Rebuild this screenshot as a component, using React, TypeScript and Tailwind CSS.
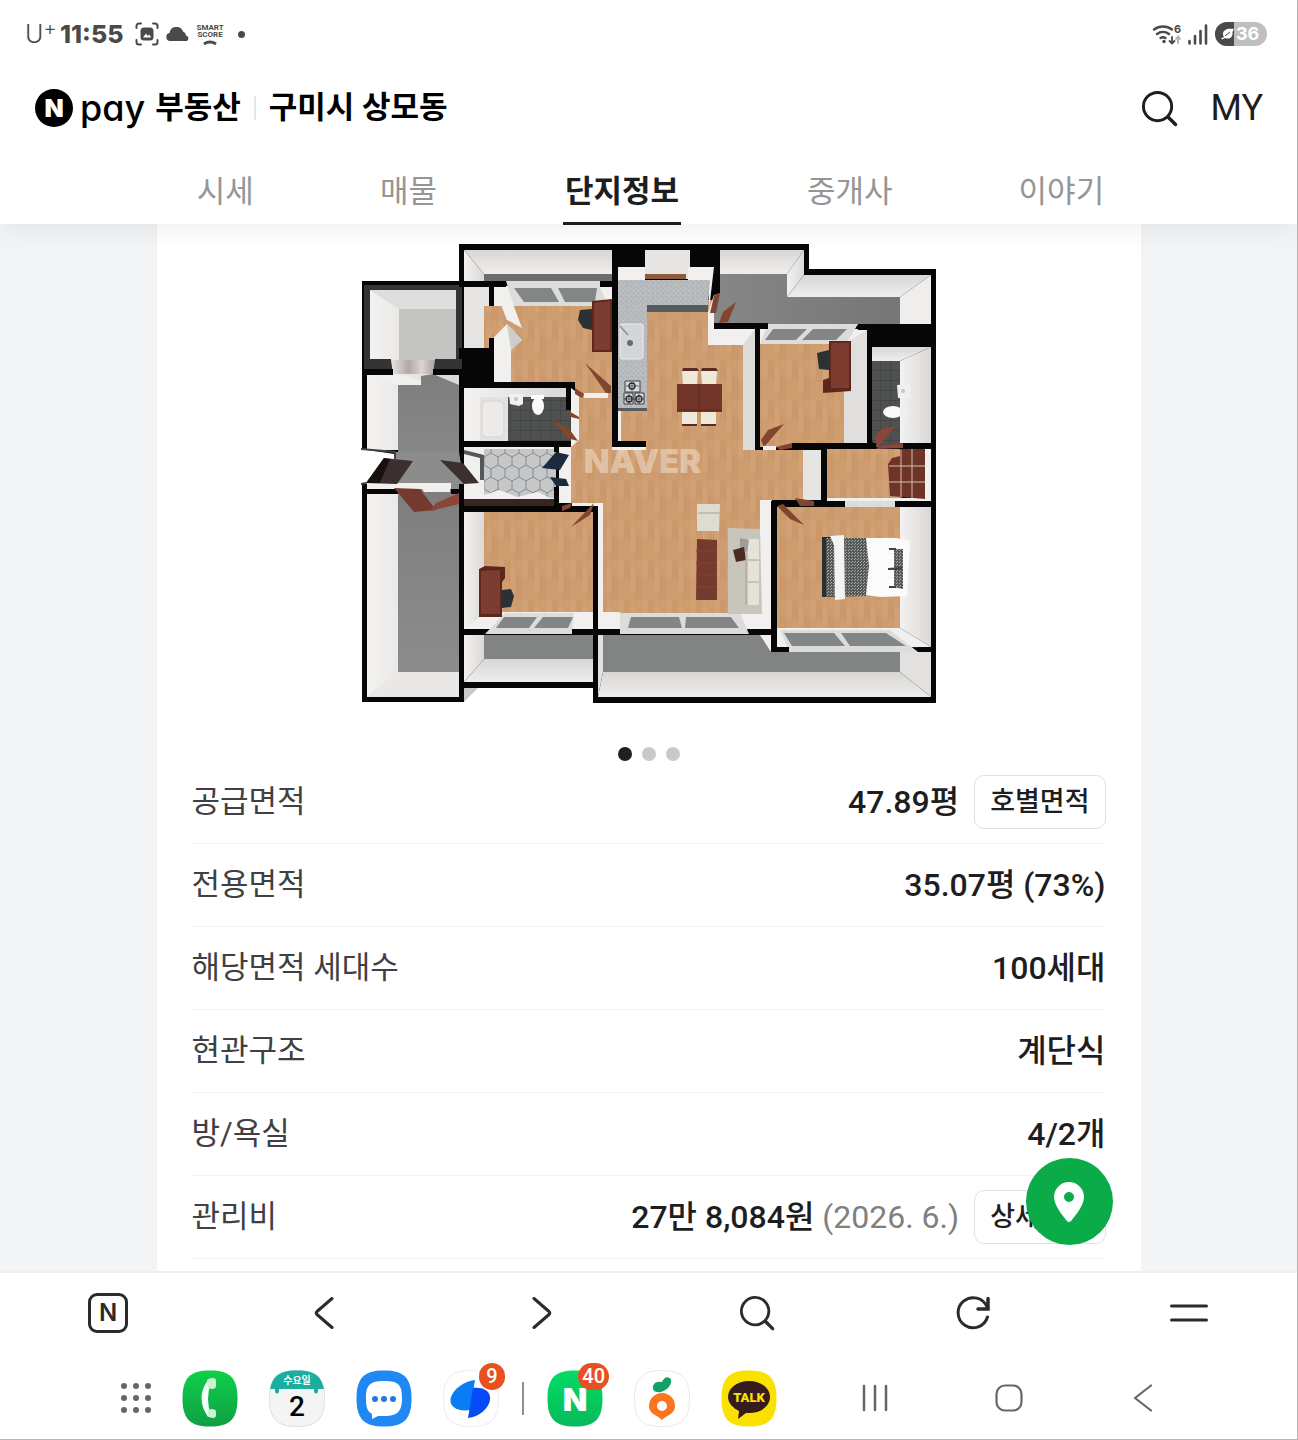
import type { ReactNode } from "react";

type Shape = [fill: string, points: string];

const WALL = "#e6e5e3";
const PALE = "#f1f0ee";
const WOOD = "url(#wood)";
const GLASS = "#838687";
const BROWN = "#743a2e";
const DOOR = "#82462f";
const FRAME = "#dcdcda";
const BLACK = "#060606";

// Fundo e pisos
const rooms: Shape[] = [
  ["#c9c9c9", "464,688 478,688 464,702"],
  [BLACK, "362,281 459,281 459,244 809,244 809,269 936,269 936,703 593,703 593,688 464,688 464,702 362,702"],
  // elevador
  ["#343434", "364,285 462,285 462,369 364,369"],
  ["url(#wallX)", "370,290 456,290 456,360 370,360"],
  ["#dededc", "370,290 456,290 456,309 399,309"],
  ["#c4c4c3", "399,309 456,309 456,360 399,360"],
  ["url(#metal)", "391,360 435,360 433,374 393,374"],
  // hall
  ["url(#wallX)", "367,374 459,374 459,450 367,450"],
  ["url(#floor)", "398,385 421,385 421,376 433,374 459,385 459,490 398,490"],
  [PALE, "367,374 393,374 421,380 421,385 398,385"],
  ["#ffffff", "361,449 394,454 394,463 380,470 366,484 361,484"],
  ["#8c8c8c", "396,452 459,452 464,484 392,484"],
  [PALE, "367,483 451,483 451,489 367,489"],
  // depósito
  ["url(#wallX)", "367,494 398,494 398,672 459,672 459,697 367,697"],
  ["#e9e8e6", "367,697 398,672 459,672 459,697"],
  ["url(#floor)", "398,489 451,489 459,494 459,672 398,672"],
  // varanda superior esquerda
  ["url(#wallX)", "464,250 484,274 484,281 464,281"],
  ["url(#wallY)", "464,250 612,250 612,274 484,274"],
  ["#6c6d6d", "484,274 612,274 612,281 484,281"],
  // quarto 1
  [WALL, "464,287 489,287 489,348 464,348"],
  [PALE, "494,286 612,286 612,306 511,306 511,382 494,382"],
  [WOOD, "484,306 612,306 612,398 575,398 575,382 511,382 511,348 484,348"],
  [PALE, "494,287 510,296 522,328 507,320"],
  [PALE, "507,324 522,340 511,350 511,382 494,382 494,337"],
  ["#cfcdca", "507,324 522,340 511,350"],
  [FRAME, "506,281 600,281 600,287 608,306 514,306"],
  [GLASS, "514,288 551,288 559,302 524,302"],
  [GLASS, "558,288 597,288 595,302 565,302"],
  // banheiro 1
  ["url(#wallX)", "464,388 566,388 566,441 464,441"],
  ["#e3e2e0", "480,397 508,397 508,441 480,441"],
  ["url(#tile)", "508,397 566,397 571,410 571,441 508,441"],
  [PALE, "571,388 579,394 579,447 571,447"],
  // entrada
  [PALE, "464,447 554,447 554,506 464,506"],
  ["url(#hex)", "484,449 556,449 556,498 484,498"],
  [PALE, "484,495 500,490 517,497 538,492 554,500 484,500"],
  ["#38251f", "464,499 554,499 554,507 464,507"],
  // quarto 3
  ["url(#wallX)", "464,512 484,512 484,612 464,630"],
  [WOOD, "484,512 593,512 593,614 484,614"],
  [PALE, "484,612 593,612 593,629 464,629"],
  ["url(#wallX)", "464,635 484,635 484,659 464,682"],
  ["url(#wallY)", "484,659 593,659 593,682 464,682"],
  ["#828383", "484,635 593,635 593,659 484,659"],
  // cozinha e sala
  [WOOD, "579,394 612,394 612,447 618,441 618,300 743,300 743,450 803,450 803,500 760,500 760,614 603,614 603,503 571,503 571,447 579,440"],
  [WOOD, "606,447 650,447 650,460 606,460"],
  [PALE, "559,447 571,447 571,503 559,503"],
  [PALE, "572,503 603,503 603,612 620,612 620,629 598,629 598,506 572,506"],
  [PALE, "612,447 646,447 646,450 612,450"],
  [WALL, "645,250 690,250 690,279 645,279"],
  ["#8c5b3c", "645,274 686,274 686,279 645,279"],
  [PALE, "618,267 645,267 645,280 618,280"],
  [PALE, "688,267 714,267 709,310 709,280 688,280"],
  [PALE, "618,408 621,408 621,441 618,441"],
  ["url(#stone)", "618,280 710,280 708,306 647,306 647,409 618,409"],
  ["#555b61", "647,305 708,305 708,312 647,312"],
  ["#555b61", "618,408 647,408 647,411 618,411"],
  [PALE, "714,295 714,329 755,329 755,450 743,450 743,345 708,345 708,312"],
  ["#dcdbd9", "743,345 755,329 755,450 743,450"],
  [WALL, "803,450 821,450 821,500 803,500"],
  [PALE, "760,500 772,500 772,629 735,629 732,614 760,614"],
  // varanda superior direita
  ["url(#wallY)", "720,250 804,250 787,274 720,274"],
  ["url(#wallX)", "804,250 804,275 787,297 787,274"],
  ["url(#wallY)", "804,275 931,275 900,297 787,297"],
  ["#efeeed", "931,275 931,325 900,325 900,297"],
  ["url(#floorX)", "720,274 787,274 787,297 900,297 900,325 714,325 714,295 720,293"],
  // quarto 2
  [PALE, "760,329 867,329 867,443 844,443 844,344 760,344"],
  ["#e0dfdd", "844,344 867,330 867,443 844,443"],
  [WOOD, "760,344 844,344 844,443 792,447 760,447"],
  [FRAME, "768,324 858,324 846,344 760,344"],
  [GLASS, "773,329 807,329 796,340 765,340"],
  [GLASS, "813,329 847,329 836,340 802,340"],
  // banheiro 2
  ["url(#wallY)", "872,347 931,347 900,361 872,361"],
  ["url(#wallX)", "931,347 931,443 900,443 900,361"],
  ["url(#tile)", "872,361 900,361 900,447 876,447 872,441"],
  // closet
  [WOOD, "827,449 900,449 900,499 827,499"],
  [PALE, "925,449 931,449 931,501 827,501 827,498 925,498"],
  // suíte
  [WOOD, "777,507 900,507 900,630 777,630"],
  ["url(#wallX)", "900,507 931,507 931,647 900,628"],
  [PALE, "777,628 900,628 931,647 777,648"],
  // varanda inferior
  ["#828383", "603,635 771,635 771,652 900,652 900,672 603,672"],
  ["#e2e1df", "598,635 603,635 603,672 598,697"],
  ["url(#wallY)", "603,672 900,672 931,697 598,697"],
  ["#e2e1df", "900,652 931,652 931,697 900,672"],
  [PALE, "760,635 771,635 771,652"],
  // janelas
  [FRAME, "505,613 574,613 572,634 485,634"],
  [GLASS, "504,617 537,617 529,628 496,628"],
  [GLASS, "543,617 573,617 568,628 534,628"],
  [FRAME, "620,613 740,613 749,634 620,634"],
  [GLASS, "631,617 679,617 682,628 628,628"],
  [GLASS, "686,617 731,617 739,628 685,628"],
  [FRAME, "780,630 890,630 918,652 789,652"],
  [GLASS, "784,633 834,633 845,646 792,646"],
  [GLASS, "841,633 886,633 906,646 850,646"],
  [FRAME, "845,501 895,501 895,507 845,507"],
];

// Paredes cortadas por cima dos pisos
const cuts: Shape[] = [
  [BLACK, "459,281 506,281 506,287 494,287 494,297 489,297 489,287 459,287"],
  [BLACK, "600,281 612,281 612,287 600,287"],
  [BLACK, "494,338 494,382 575,382 575,388 459,388 459,348 489,348 489,338"],
  [BLACK, "362,369 393,369 393,375 362,375"],
  [BLACK, "433,369 464,369 464,375 433,375"],
  ["#343434", "364,359 391,359 391,369 364,369"],
  ["#343434", "435,359 462,359 462,369 435,369"],
  [BLACK, "459,369 464,369 464,450 459,450"],
  [BLACK, "566,388 571,388 571,410 566,410"],
  [BLACK, "459,441 571,441 571,447 459,447"],
  [BLACK, "362,489 392,489 392,494 362,494"],
  [BLACK, "451,489 464,489 464,494 451,494"],
  [BLACK, "554,447 559,447 559,452 554,452"],
  [BLACK, "554,487 559,487 559,506 562,506 562,512 464,512 464,506 554,506"],
  [BLACK, "590,506 598,506 598,630 593,630 593,512 590,512"],
  [BLACK, "464,629 485,629 485,635 464,635"],
  [BLACK, "572,629 620,629 620,635 572,635"],
  [BLACK, "612,244 618,244 618,441 646,441 646,447 612,447"],
  [BLACK, "714,323 768,323 768,329 760,329 760,447 755,447 755,329 714,329"],
  [BLACK, "858,324 936,324 936,347 872,347 872,443 876,443 876,448 792,448 792,443 867,443 867,330 858,330"],
  [BLACK, "903,443 936,443 936,448 903,448"],
  [BLACK, "821,448 827,448 827,501 845,501 845,507 814,507 814,501 821,501"],
  [BLACK, "895,501 936,501 936,507 895,507"],
  [BLACK, "771,501 783,501 783,506 777,506 777,647 789,647 789,652 771,652 771,635 749,635 749,629 771,629"],
  [BLACK, "918,647 936,647 936,652 918,652"],
];

// Portas e móveis
const furniture: Shape[] = [
  ["#3b302d", "366,483 384,458 413,461 397,484"],
  ["#17120f", "366,483 384,458 390,459 380,483"],
  ["#3b302d", "440,460 463,463 479,483 464,484"],
  ["#55575a", "464,450 484,455 484,480 480,480 480,458 464,454"],
  [BROWN, "394,488 420,489 436,510 414,512"],
  ["#8a4637", "430,511 436,503 459,493 459,504"],
  [PALE, "421,487 450,487 450,492 424,492"],
  [DOOR, "585,363 611,386 611,393 606,393"],
  [DOOR, "575,388 584,394 582,398 575,394"],
  [PALE, "584,393 608,393 608,398 584,398"],
  [DOOR, "551,418 570,430 578,441 567,438"],
  [DOOR, "567,410 579,417 579,419 571,417"],
  ["#1d2a3d", "542,468 556,452 569,455 560,470"],
  ["#1d2a3d", "550,477 566,479 569,486 556,486"],
  [DOOR, "571,527 590,507 594,503 590,515"],
  [DOOR, "562,506 572,503 570,508 562,511"],
  ["#7b4434", "714,296 720,293 716,313 710,313"],
  [DOOR, "719,323 723,312 736,302 728,322"],
  [DOOR, "761,440 768,430 784,424 764,447"],
  [DOOR, "776,447 792,443 792,448 780,450"],
  [PALE, "763,446 776,446 776,450 763,450"],
  ["#8a4637", "875,436 880,430 896,426 877,448"],
  ["#8a4637", "880,446 903,443 903,448 876,449"],
  [DOOR, "777,506 783,504 804,525 790,519"],
  [DOOR, "795,498 814,501 814,506 800,506"],
  // escrivaninhas e cadeiras
  ["#2d3133", "580,310 592,309 592,330 583,328 578,320"],
  ["#5d271e", "592,301 612,299 612,352 592,352"],
  ["#7c3d30", "594,303 610,301 610,350 594,350"],
  ["#2d3133", "817,353 829,350 829,370 819,369"],
  ["#5d271e", "829,341 851,341 851,391 823,393 823,380 829,378"],
  ["#7c3d30", "831,343 849,343 849,388 831,388"],
  ["#5d271e", "479,569 485,566 505,567 505,578 502,582 502,617 479,617"],
  ["#7c3d30", "481,571 500,570 500,614 481,614"],
  ["#2d3133", "502,590 511,589 514,596 511,607 502,608"],
  // pias
  [PALE, "509,394 523,394 523,404 519,406 510,404"],
  ["#ffffff", "531,395 544,395 544,399 531,399"],
  [PALE, "897,385 910,384 910,398 898,398"],
  // mesa de jantar
  ["#efe9dc", "682,371 698,371 697,385 683,385"],
  ["#efe9dc", "701,371 717,371 716,385 702,385"],
  ["#efe9dc", "682,411 697,411 697,424 682,424"],
  ["#efe9dc", "701,411 716,411 716,424 701,424"],
  ["#5b2a20", "683,368 697,368 699,371 682,371"],
  ["#5b2a20", "702,368 716,368 718,371 701,371"],
  ["#5b2a20", "682,424 697,424 697,426 682,426"],
  ["#5b2a20", "701,424 716,424 716,426 701,426"],
  ["#713529", "677,384 722,384 722,412 677,412"],
  // sala
  ["#dedbd0", "697,504 720,504 719,531 697,531"],
  ["#c2bfb3", "698,512 720,512 720,514 698,514"],
  ["#743a2e", "697,539 717,540 717,600 696,600"],
  ["#c8c6ba", "728,528 760,529 762,614 728,614"],
  ["#e5e3d9", "748,539 759,539 759,605 748,605"],
  ["#9c9c98", "740,538 749,540 747,552 740,549"],
  ["#4d2a24", "733,550 744,547 746,560 736,562"],
  // armário
  ["#6f3327", "888,464 892,458 900,456 900,449 925,449 925,499 890,496"],
  // cama
  ["#2c2f30", "822,537 836,537 836,597 822,597"],
  ["url(#check)", "826,538 868,538 869,566 867,596 826,597"],
  ["#f3f3f2", "830,536 844,535 845,599 835,600 834,545"],
  ["#fbfbfb", "866,538 896,538 910,541 907,596 880,597 866,595 869,566"],
  ["url(#check)", "894,549 903,549 903,589 894,587"],
  ["#404345", "888,568 902,567 902,570 888,570"],
  ["#404345", "889,548 896,548 896,550 889,550"],
  ["#404345", "889,586 896,586 896,588 889,588"],
];

function Polygons({ items }: { items: Shape[] }) {
  return (
    <>
      {items.map(([fill, points], i) => (
        <polygon key={i} fill={fill} points={points} />
      ))}
    </>
  );
}

function FloorPlan() {
  return (
    <svg viewBox="361 243 576 461" className="mx-auto h-[461px] w-[576px] max-w-full" role="img" aria-label="평면도">
      <defs>
        <linearGradient id="wallX">
          <stop offset="0" stopColor="#f3f2f1" />
          <stop offset="1" stopColor="#dad9d7" />
        </linearGradient>
        <linearGradient id="wallY" x2="0" y2="1">
          <stop offset="0" stopColor="#d8d7d5" />
          <stop offset="1" stopColor="#efeeed" />
        </linearGradient>
        <linearGradient id="floor" x2="0" y2="1">
          <stop offset="0" stopColor="#7e7e7e" />
          <stop offset="1" stopColor="#8c8c8c" />
        </linearGradient>
        <linearGradient id="floorX">
          <stop offset="0" stopColor="#868686" />
          <stop offset="1" stopColor="#767676" />
        </linearGradient>
        <linearGradient id="metal">
          <stop offset="0" stopColor="#e8e6e4" />
          <stop offset="0.4" stopColor="#b0a8a5" />
          <stop offset="0.7" stopColor="#dad6d3" />
          <stop offset="1" stopColor="#aaa29f" />
        </linearGradient>
        <pattern id="wood" width="24" height="40" patternUnits="userSpaceOnUse">
          <rect width="24" height="40" fill="#cf9e70" />
          <path d="M0 0h6v22H0zM12 14h6v26h-6z" fill="#cb996b" />
          <path d="M6 8h6v24H6zM18 0h6v18h-6z" fill="#d2a276" />
          <path d="M6 0v40M12 0v40M18 0v40M24 0v40" stroke="#c49164" strokeWidth="0.4" />
        </pattern>
        <pattern id="tile" width="10" height="10" patternUnits="userSpaceOnUse">
          <rect width="10" height="10" fill="#4f5050" />
          <path d="M0 0h10M0 0v10" stroke="#404141" strokeWidth="1.4" />
        </pattern>
        <pattern id="hex" x="484" y="449" width="14" height="24" patternUnits="userSpaceOnUse">
          <rect width="14" height="24" fill="#c5c7c9" />
          <path d="M7 0v4l7 4v8l-7 4v4M7 4L0 8v8l7 4" fill="none" stroke="#808386" strokeWidth="0.9" />
        </pattern>
        <pattern id="stone" width="5" height="5" patternUnits="userSpaceOnUse">
          <rect width="5" height="5" fill="#b6babd" />
          <path d="M1 1h1v1H1zM3 3h1v1H3z" fill="#a8acb0" />
          <path d="M3 0h1v1H3zM0 3h1v1H0z" fill="#c6c9cc" />
        </pattern>
        <pattern id="check" width="3" height="3" patternUnits="userSpaceOnUse">
          <rect width="3" height="3" fill="#555957" />
          <path d="M0 0h1v1H0zM2 1h1v1H2z" fill="#a7aaa8" />
        </pattern>
      </defs>
      <Polygons items={rooms} />
      <Polygons items={cuts} />
      <Polygons items={furniture} />
      <path d="M361 449l34 3v9M361 484l5-1" stroke="#444" strokeWidth="2" fill="none" />
      {/* banheira, vasos e pias */}
      <rect x="482" y="401" width="22" height="36" rx="5" fill="#ecebe9" stroke="#d6d5d3" />
      <ellipse cx="538" cy="406" rx="6" ry="9" fill="#fafafa" />
      <ellipse cx="893" cy="412" rx="10" ry="6" fill="#fafafa" />
      <rect x="900" y="407" width="7" height="11" fill="#f1f0ee" />
      <circle cx="516" cy="399" r="2" fill="#c5c5c5" />
      <circle cx="903" cy="391" r="2" fill="#c5c5c5" />
      {/* cozinha */}
      <rect x="620" y="324" width="23" height="35" rx="2" fill="#d3d5d6" stroke="#eceded" />
      <circle cx="630" cy="343" r="3" fill="#686c70" />
      <path d="M620 326l8 9" stroke="#8b8f92" strokeWidth="1.5" />
      <path d="M625 381h15v11h-15zM624 393h9v11h-9zM635 393h9v11h-9z" fill="#d9dada" stroke="#3b3e40" />
      <g fill="none" stroke="#26292b" strokeWidth="1.3">
        <circle cx="632" cy="386" r="3" />
        <circle cx="629" cy="399" r="3" />
        <circle cx="639" cy="399" r="3" />
        <path d="M626 386h13M632 382v9M624 399h20M629 394v10M639 394v10" strokeWidth="0.7" />
      </g>
      <path d="M699 384v28M677 410h45" stroke="#5e2a20" />
      <path d="M696 551h21M696 563h21M696 575h21M696 587h21" stroke="#824334" />
      <path d="M748 560h11M748 582h11M746 539v66" stroke="#a6a499" />
      <path d="M901 450v48M912 449v49M889 466h36M889 482h36" stroke="#d3c0b8" strokeWidth="1" />
      <text
        x="584"
        y="473"
        fill="#fff"
        fillOpacity="0.38"
        fontSize="33"
        fontWeight="900"
        fontFamily="Inter, 'Liberation Sans', sans-serif"
      >
        NAVER
      </text>
    </svg>
  );
}

function SearchIcon({ className }: { className: string }) {
  return (
    <svg viewBox="0 0 38 38" className={className} fill="none" stroke="currentColor" strokeLinecap="round">
      <circle cx="17" cy="17" r="14.5" strokeWidth="3" />
      <path d="M28 28l7.500 7.500" strokeWidth="3.500" />
    </svg>
  );
}

function StatusBar() {
  return (
    <div className="flex h-[68px] items-center justify-between pl-[25px] pr-[30px] text-[#4a4a4a]">
      <div className="flex items-center">
        <span className="flex w-[27px] items-start font-['Inter'] text-[25px] leading-7 font-light">
          U<span className="text-[20px] leading-4">+</span>
        </span>
        <span className="ml-2 font-['Inter'] text-[25px] leading-7 font-extrabold">11:55</span>
        <svg viewBox="0 0 24 24" className="ml-3 size-6" fill="none" stroke="currentColor" strokeWidth="2" strokeLinecap="round">
          <path d="M1.500 6V4a2.500 2.500 0 0 1 2.500-2.500h2M18 1.500h2A2.500 2.500 0 0 1 22.500 4v2M22.500 18v2a2.500 2.500 0 0 1-2.500 2.500h-2M6 22.500H4A2.500 2.500 0 0 1 1.500 20v-2" />
          <rect x="6.500" y="6.500" width="11" height="11" rx="2.500" fill="currentColor" />
          <path d="M8 15.500l3-4 2 2.500 1.500-1.500 1.500 3z" fill="#fff" stroke="none" />
        </svg>
        <svg viewBox="0 0 24 14" className="ml-[7px] h-[14px] w-6" fill="currentColor">
          <path d="M4 14a4 4 0 0 1-.5-7.900A7 7 0 0 1 17 4.500 4.500 4.500 0 0 1 20 8.500 3 3 0 0 1 21 14z" />
        </svg>
        <span className="ml-1.5 flex flex-col items-center font-['Roboto'] text-[8px] leading-[7px] font-bold">
          <span>SMART</span>
          <span>SCORE</span>
          <svg viewBox="0 0 14 5" className="mt-0.5 h-[5px] w-[14px]" fill="none" stroke="currentColor" strokeWidth="3">
            <path d="M1 4q6-4 12 0" />
          </svg>
        </span>
        <span className="ml-[14px] size-[7px] rounded-full bg-current" />
      </div>
      <div className="flex items-center">
        <svg viewBox="0 0 30 24" className="h-6 w-[30px]" fill="none" stroke="currentColor" strokeWidth="2.400" strokeLinecap="round">
          <path d="M2 7.500a15 15 0 0 1 18 0M5 12a10 10 0 0 1 12 0M8.500 16a5 5 0 0 1 5 0" />
          <circle cx="12" cy="19.500" r="1" fill="currentColor" strokeWidth="1.500" />
          <path d="M20 15v6M17.500 19l2.500 2.500 2.500-2.500" strokeWidth="1.800" />
          <path d="M26 21v-6M24 17l2-2.500 2 2.500" stroke="#b0b0b0" strokeWidth="1.800" />
          <text x="22" y="11" fill="currentColor" stroke="none" fontSize="11" fontWeight="700" fontFamily="Inter, sans-serif">6</text>
        </svg>
        <svg viewBox="0 0 20 22" className="ml-1.5 h-[22px] w-5" fill="none" stroke="currentColor" strokeWidth="2.600" strokeLinecap="round">
          <path d="M1.500 18v2.500M7 13v7.500M12.500 8v12.500M18 2.500v18" />
        </svg>
        <span className="ml-[7px] flex h-6 w-[52px] overflow-hidden rounded-full bg-[#bfbfbf]">
          <span className="flex w-[19px] items-center bg-[#4a4a4a] pl-1.5">
            <svg viewBox="0 0 13 12" className="h-3 w-[13px]" fill="#fff">
              <path d="M13 1C6 0 2 2 2 6q0 2 1 3l-3 1.500 1 1L4 10c6 2 8-2 7.500-6z" />
              <path d="M4 8l5-4" stroke="#4a4a4a" />
            </svg>
          </span>
          <span className="pl-0.5 font-['Inter'] text-[18px] leading-6 font-bold text-white">36</span>
        </span>
      </div>
    </div>
  );
}

function Header() {
  return (
    <header className="flex h-[80px] items-center justify-between pl-[35px] pr-[34px]">
      <div className="flex items-center">
        <a href="#" className="flex items-center text-black">
          <span className="flex size-[38px] items-center justify-center rounded-full bg-black font-['Inter'] text-[25px] leading-none font-black text-white">
            N
          </span>
          <span className="ml-[7px] font-['Inter'] text-[36px] leading-9 font-medium [font-feature-settings:'cv11']">pay</span>
          <span className="ml-[10px] text-[31px] leading-9 font-bold">부동산</span>
        </a>
        <span className="mx-[13px] h-6 w-0.5 bg-[#e4e6e8]" />
        <h1 className="text-[31px] leading-9 font-bold text-black">구미시 상모동</h1>
      </div>
      <div className="flex items-center gap-8 text-[#1e1e20]">
        <button aria-label="검색">
          <SearchIcon className="size-[37px]" />
        </button>
        <a href="#" className="text-[36px] leading-10">MY</a>
      </div>
    </header>
  );
}

const tabs = ["시세", "매물", "단지정보", "중개사", "이야기"];

function Tabs() {
  return (
    <nav className="flex h-[76px] justify-center gap-[126px] pt-3 pl-1 text-[31px] leading-[64px] text-[#959595]">
      {tabs.map((tab) =>
        tab === "단지정보" ? (
          <a key={tab} href="#" aria-current="page" className="z-10 h-[65px] border-b-[3px] border-[#1e1e20] px-0.5 font-bold text-[#1e1e20]">
            {tab}
          </a>
        ) : (
          <a key={tab} href="#">
            {tab}
          </a>
        )
      )}
    </nav>
  );
}

function Row({ label, action, children }: { label: string; action?: string; children: ReactNode }) {
  return (
    <div className="flex h-[83px] items-center justify-between border-b border-[#f0f2f3]">
      <dt className="text-[31px] leading-9 text-[#404044]">{label}</dt>
      <dd className="flex items-center gap-[15px] text-[32px] leading-9 font-medium text-[#1e1e20]">
        <span>{children}</span>
        {action && (
          <button className="h-[54px] rounded-[10px] border border-[#dfe0e2] px-[15px] text-[27px] leading-9 font-medium">{action}</button>
        )}
      </dd>
    </div>
  );
}

function ComplexInfo() {
  return (
    <main className="bg-[#f2f4f6]">
      <div className="relative mx-auto max-w-[984px] bg-white px-[35px] pt-[19px] pb-3">
        <FloorPlan />
        <div className="mt-[43px] flex justify-center gap-[10px]">
          <button aria-label="1" className="size-[14px] rounded-full bg-[#1e1e23]" />
          <button aria-label="2" className="size-[14px] rounded-full bg-[#c8c9cb]" />
          <button aria-label="3" className="size-[14px] rounded-full bg-[#c8c9cb]" />
        </div>
        <dl>
          <Row label="공급면적" action="호별면적">47.89평</Row>
          <Row label="전용면적">35.07평 (73%)</Row>
          <Row label="해당면적 세대수">100세대</Row>
          <Row label="현관구조">계단식</Row>
          <Row label="방/욕실">4/2개</Row>
          <Row label="관리비" action="상세보기">
            27만 8,084원 <span className="font-normal text-[#808080]">(2026. 6.)</span>
          </Row>
        </dl>
        <button aria-label="지도" className="absolute right-7 bottom-[26px] flex size-[87px] items-center justify-center rounded-full bg-[#0bab49]">
          <svg viewBox="0 0 30 40" className="h-10 w-[30px]" fill="#fff">
            <path fillRule="evenodd" d="M15 0a15 15 0 0 1 15 15c0 8-8 18-13 24q-2 2-4 0C8 33 0 23 0 15A15 15 0 0 1 15 0zm0 10a5 5 0 1 0 0 10 5 5 0 0 0 0-10z" />
          </svg>
        </button>
      </div>
    </main>
  );
}

function BrowserBar() {
  return (
    <nav className="grid h-[82px] grid-cols-6 items-center justify-items-center border-t-2 border-[#efefef] text-[#2b2b2d]">
      <button className="flex size-10 items-center justify-center rounded-[9px] border-[3px] border-current font-['Inter'] text-[24px] leading-none font-semibold">
        N
      </button>
      <button aria-label="뒤로">
        <svg viewBox="0 0 20 32" className="h-8 w-5" fill="none" stroke="currentColor" strokeWidth="3" strokeLinecap="round" strokeLinejoin="round">
          <path d="M18 1.500L3 14.500q-1.500 1.500 0 3L18 30.500" />
        </svg>
      </button>
      <button aria-label="앞으로">
        <svg viewBox="-4 0 24 32" className="h-8 w-6" fill="none" stroke="currentColor" strokeWidth="3" strokeLinecap="round" strokeLinejoin="round">
          <path d="M2 1.500l15 13q1.500 1.500 0 3L2 30.500" />
        </svg>
      </button>
      <button aria-label="검색">
        <SearchIcon className="size-9" />
      </button>
      <button aria-label="새로고침">
        <svg viewBox="0 0 34 34" className="size-[34px]" fill="none" stroke="currentColor" strokeWidth="3" strokeLinecap="round">
          <path d="M31.500 21A15 15 0 1 1 31 11" />
          <path d="M32 2.500V13H22" strokeWidth="3.500" />
        </svg>
      </button>
      <button aria-label="메뉴">
        <svg viewBox="0 0 38 18" className="h-[18px] w-[38px]" stroke="currentColor" strokeWidth="3" strokeLinecap="round">
          <path d="M1.500 2h35M1.500 16h35" />
        </svg>
      </button>
    </nav>
  );
}

function AppIcon({ label, badge, children }: { label: string; badge?: string; children: ReactNode }) {
  return (
    <button aria-label={label} className="relative">
      <svg viewBox="0 0 56 57" className="h-[57px] w-14">
        {children}
      </svg>
      {badge && (
        <span className="absolute -top-[7px] -right-1.5 flex h-[27px] min-w-[26px] items-center justify-center rounded-full bg-[#e8501f] px-1 font-['Roboto'] text-[20px] leading-none font-medium text-white">
          {badge}
        </span>
      )}
    </button>
  );
}

const SQUIRCLE = "M28 .5C48 .5 55.500 8 55.500 28.500S48 56.500 28 56.500.5 49 .5 28.500 8 .5 28 .5z";

function Dock() {
  return (
    <div className="flex h-[86px] items-center justify-between pt-1 pr-[140px] pl-[121px]">
      <div className="flex items-center gap-[31px]">
        <button aria-label="앱" className="grid grid-cols-3 gap-[6px]">
          {Array.from({ length: 9 }, (_, i) => (
            <span key={i} className="size-[6px] rounded-full bg-[#666]" />
          ))}
        </button>
        <AppIcon label="전화">
          <defs>
            <linearGradient id="call" x2="0" y2="1">
              <stop offset="0" stopColor="#0fd04a" />
              <stop offset="1" stopColor="#0f9f45" />
            </linearGradient>
          </defs>
          <path d={SQUIRCLE} fill="url(#call)" />
          <path d="M26 10q-13 18 0 37l3-2q-6-16 0-33z" fill="#f4fff6" />
          <path d="M25 10q2-2 6-2 3 0 3 3v5q0 3-4 3l-4-1zM26 40l4-1q4 0 4 3v3q0 3-3 3-3 0-5-2z" fill="#c9f3d3" />
        </AppIcon>
        <AppIcon label="캘린더">
          <defs>
            <clipPath id="calendar">
              <path d={SQUIRCLE} />
            </clipPath>
          </defs>
          <path d={SQUIRCLE} fill="#f4f4f4" stroke="#dedede" />
          <path d="M0 0h56v19H0zM6 19h4v3q-2 3-4 0zM45 19h4v3q-2 3-4 0z" fill="#19ae9f" clipPath="url(#calendar)" />
          <text x="28" y="14" textAnchor="middle" fill="#fff" fontSize="10" fontWeight="700">수요일</text>
          <text x="28" y="46" textAnchor="middle" fill="#000" fontSize="28" fontWeight="500">2</text>
        </AppIcon>
        <AppIcon label="메시지">
          <path d={SQUIRCLE} fill="#2088f3" />
          <path d="M28 11c15 0 18 4 18 17s-4 18-18 18h-6l-6 3v-5C11 41 10 37 10 28c0-13 4-17 18-17z" fill="#fff" />
          <g fill="#2479df">
            <circle cx="19" cy="29" r="3" />
            <circle cx="28" cy="29" r="3" />
            <circle cx="37" cy="29" r="3" />
          </g>
        </AppIcon>
        <AppIcon label="토스" badge="9">
          <path d={SQUIRCLE} fill="#fff" stroke="#ececf0" />
          <path d="M32 10L27 40C14 42 5 36 8 27c3-8 13-16 24-17z" fill="#0a7cf5" />
          <path d="M30 18c12-1 18 4 17 12S36 47 25 48z" fill="#054cf7" />
        </AppIcon>
        <span className="-mx-2 h-[33px] w-0.5 bg-[#909090]" />
        <AppIcon label="네이버" badge="40">
          <defs>
            <linearGradient id="naver" x2="0" y2="1">
              <stop offset="0" stopColor="#04dc64" />
              <stop offset="1" stopColor="#07b95c" />
            </linearGradient>
          </defs>
          <path d={SQUIRCLE} fill="url(#naver)" />
          <text x="28" y="41" textAnchor="middle" fill="#fff" fontSize="32" fontWeight="900" fontFamily="Inter, sans-serif">N</text>
        </AppIcon>
        <AppIcon label="당근">
          <path d={SQUIRCLE} fill="#fff" stroke="#e9e9e9" />
          <path d="M27 22c-6 1-9-2-8-6s5-5 9-4c2-6 8-6 9-2s-3 10-10 12z" fill="#12a067" />
          <path fillRule="evenodd" d="M28 23a13 13 0 0 1 13 13c0 8-8 9-13 14-5-5-13-6-13-14a13 13 0 0 1 13-13zm0 8a5 5 0 1 0 0 10 5 5 0 0 0 0-10z" fill="#fb7420" />
        </AppIcon>
        <AppIcon label="카카오톡">
          <path d={SQUIRCLE} fill="#fae100" />
          <path d="M28 11c12 0 21 7 21 16s-9 16-21 16h-3l-8 6 1-8C12 38 7 33 7 27c0-9 9-16 21-16z" fill="#371c1d" />
          <text x="28" y="32" textAnchor="middle" fill="#fae100" fontSize="13" fontWeight="900" fontFamily="Roboto, sans-serif">TALK</text>
        </AppIcon>
      </div>
      <div className="flex items-center gap-[106px] text-[#666]">
        <button aria-label="최근 앱">
          <svg viewBox="0 0 28 28" className="size-7" stroke="currentColor" strokeWidth="2.500" strokeLinecap="round">
            <path d="M3 2v24M14 2v24M25 2v24" />
          </svg>
        </button>
        <button aria-label="홈">
          <svg viewBox="0 0 28 28" className="size-7" fill="none" stroke="currentColor" strokeWidth="2.200">
            <rect x="1.500" y="1.500" width="25" height="25" rx="8.500" />
          </svg>
        </button>
        <button aria-label="이전">
          <svg viewBox="0 0 28 28" className="size-7" fill="none" stroke="currentColor" strokeWidth="2.200" strokeLinecap="round" strokeLinejoin="round">
            <path d="M22 1.500L6 14l16 12.500" />
          </svg>
        </button>
      </div>
    </div>
  );
}

export default function App() {
  return (
    <div className="min-h-screen border-r border-b border-[#b5b5b5] bg-white font-['Roboto','Noto_Sans_CJK_KR',sans-serif]">
      <div className="relative z-10 bg-white shadow-[0_8px_24px_rgba(0,0,0,0.06)]">
        <StatusBar />
        <Header />
        <Tabs />
      </div>
      <ComplexInfo />
      <BrowserBar />
      <Dock />
    </div>
  );
}
